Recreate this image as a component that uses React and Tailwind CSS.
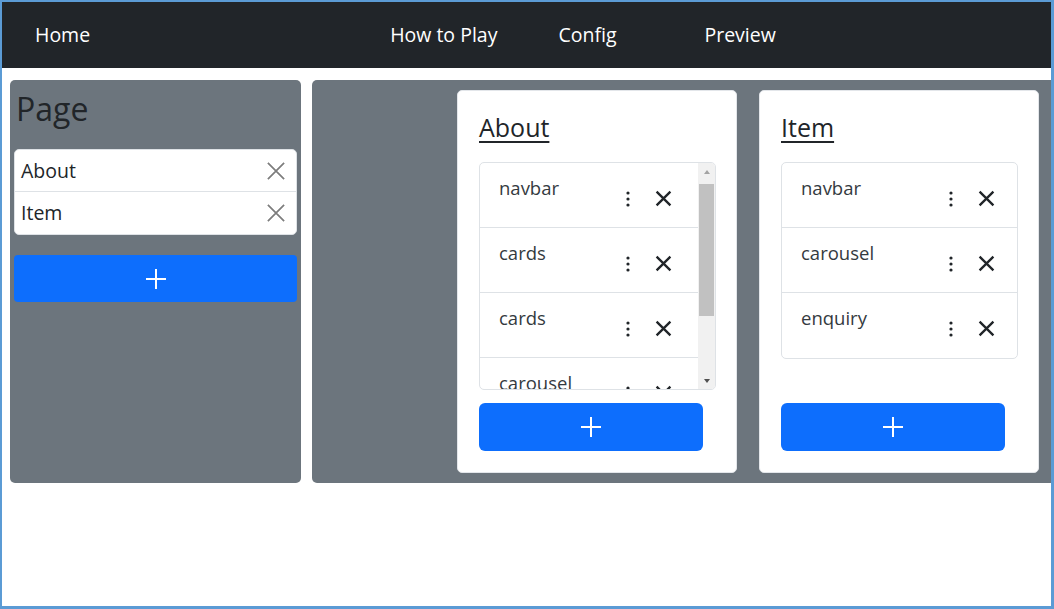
import React from "react";

const FONT = { fontFamily: '"Open Sans", "Noto Sans", "Liberation Sans", sans-serif' };

function Dots() {
  return (
    <svg width="4" height="16" viewBox="0 0 4 16" className="shrink-0">
      <circle cx="2" cy="2" r="1.6" fill="#212529" />
      <circle cx="2" cy="8" r="1.6" fill="#212529" />
      <circle cx="2" cy="14" r="1.6" fill="#212529" />
    </svg>
  );
}

function XIcon({ size = 17, stroke = "#212529", width = 2.2 }) {
  return (
    <svg width={size} height={size} viewBox="0 0 16 16" className="shrink-0">
      <path d="M1.5 1.5 L14.5 14.5 M14.5 1.5 L1.5 14.5" stroke={stroke} strokeWidth={width} strokeLinecap="butt" fill="none" />
    </svg>
  );
}

function Plus() {
  return (
    <svg width="20" height="20" viewBox="0 0 20 20">
      <path d="M10 0 V20 M0 10 H20" stroke="#ffffff" strokeWidth="2" fill="none" />
    </svg>
  );
}

function Row({ label, last, pr }) {
  return (
    <div className={`flex h-[65px] shrink-0 items-start justify-between pl-[19px] ${pr} ${last ? "" : "border-b border-[#dee2e6]"}`}>
      <span className="mt-[10px] text-[18.5px] leading-[30px] text-[#343a40]">{label}</span>
      <div className="mt-[27px] flex items-center gap-[25px]">
        <Dots />
        <XIcon />
      </div>
    </div>
  );
}

function Scrollbar() {
  return (
    <div className="flex w-[17px] shrink-0 flex-col bg-[#f1f1f1]">
      <div className="flex h-[17px] items-center justify-center">
        <div className="h-0 w-0 border-x-[3.5px] border-b-[4px] border-x-transparent border-b-[#a3a3a3]" />
      </div>
      <div className="mt-[4px] h-[132px] w-[15px] self-center bg-[#c1c1c1]" />
      <div className="flex-1" />
      <div className="flex h-[17px] items-center justify-center">
        <div className="h-0 w-0 border-x-[3.5px] border-t-[4px] border-x-transparent border-t-[#505050]" />
      </div>
    </div>
  );
}

function Card({ title, items, scroll }) {
  return (
    <div className="flex h-[383px] w-[280px] shrink-0 flex-col rounded-[5px] border border-[#e3e6ea] bg-white pl-[21px]">
      <h4 className="mt-[22px] text-[25px] font-medium leading-[29px] text-[#212529] underline decoration-[2px] underline-offset-[4px]">
        {title}
      </h4>
      {scroll ? (
        <div className="mt-[20px] flex h-[228px] w-[237px] overflow-hidden rounded-[5px] border border-[#dee2e6]">
          <div className="flex min-w-0 flex-1 flex-col">
            {items.map((it, i) => (
              <Row key={i} label={it} last={false} pr="pr-[26px]" />
            ))}
          </div>
          <Scrollbar />
        </div>
      ) : (
        <div className="mt-[20px] flex w-[237px] flex-col overflow-hidden rounded-[5px] border border-[#dee2e6]">
          {items.map((it, i) => (
            <Row key={i} label={it} last={i === items.length - 1} pr="pr-[22px]" />
          ))}
        </div>
      )}
      <div className="flex-1" />
      <button className="mb-[21px] flex h-[48px] w-[224px] items-center justify-center rounded-[6px] bg-[#0d6efd]">
        <Plus />
      </button>
    </div>
  );
}

function PageRow({ label, last }) {
  return (
    <div className={`flex h-[42px] items-center justify-between pl-[6px] pr-[10px] ${last ? "" : "border-b border-[#dee2e6]"}`}>
      <span className="text-[19.5px] leading-[30px] text-[#212529]">{label}</span>
      <XIcon size={20} stroke="#7d7d7d" width={1.4} />
    </div>
  );
}

export default function App() {
  return (
    <div
      style={FONT}
      className="box-border h-[609px] w-[1054px] overflow-hidden border-b-[3px] border-l-2 border-r-[3px] border-t-2 border-[#5b9bd5] bg-white"
    >
      <nav className="flex h-[66px] items-center bg-[#212529] text-[19.5px] text-white">
        <span className="ml-[33px]">Home</span>
        <span className="ml-[300px]">How to Play</span>
        <span className="ml-[61px]">Config</span>
        <span className="ml-[88px]">Preview</span>
      </nav>
      <div className="flex pl-[8px] pt-[12px]">
        <div className="flex h-[403px] w-[291px] shrink-0 flex-col rounded-[5px] bg-[#6c757d] px-[4px]">
          <h2 className="ml-[2px] mt-[10px] text-[32px] font-normal leading-[38px] text-[#212529]">Page</h2>
          <div className="mt-[21px] overflow-hidden rounded-[5px] border border-[#dee2e6] bg-white">
            <PageRow label="About" />
            <PageRow label="Item" last />
          </div>
          <button className="mt-[20px] flex h-[47px] w-full items-center justify-center rounded-[4px] bg-[#0d6efd]">
            <Plus />
          </button>
        </div>
        <div className="ml-[11px] flex h-[403px] w-[800px] shrink-0 gap-[22px] rounded-l-[5px] bg-[#6c757d] pl-[145px] pt-[10px]">
          <Card title="About" items={["navbar", "cards", "cards", "carousel"]} scroll />
          <Card title="Item" items={["navbar", "carousel", "enquiry"]} />
        </div>
      </div>
    </div>
  );
}
